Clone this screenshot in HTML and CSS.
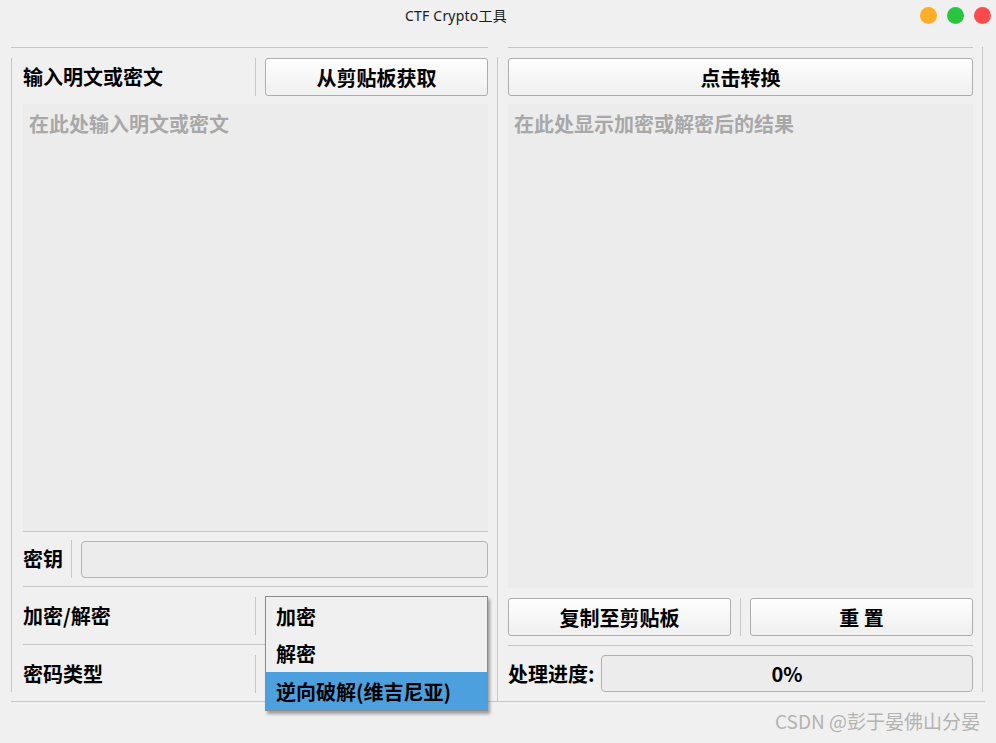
FILE: index.html
```html
<!DOCTYPE html>
<html lang="zh-CN">
<head>
  <meta charset="UTF-8">
  <title>CTF Crypto工具</title>
  <link rel="stylesheet" href="styles.css">
</head>
<body>
  <div class="window">
    <header class="titlebar">
      <span class="title">CTF Crypto工具</span>
      <div class="lights">
        <span class="light yellow"></span>
        <span class="light green"></span>
        <span class="light red"></span>
      </div>
    </header>

    <main class="frame">
      <!-- left side: input + options -->
      <section class="panel panel-left">
        <div class="panel-body bordered">
          <div class="row">
            <label class="label wide">输入明文或密文</label>
            <span class="vsep"></span>
            <button class="btn grow">从剪贴板获取</button>
          </div>
          <textarea class="textbox input-box" placeholder="在此处输入明文或密文"></textarea>
          <div class="hline"></div>
          <div class="row key-row">
            <label class="label narrow">密钥</label>
            <span class="vsep"></span>
            <input class="key-input" type="text">
          </div>
          <div class="hline gap8"></div>
          <div class="row combo-row">
            <label class="label wide">加密/解密</label>
            <span class="vsep"></span>
            <div class="combo">
              <ul class="popup">
                <li>加密</li>
                <li class="mid">解密</li>
                <li class="active">逆向破解(维吉尼亚)</li>
              </ul>
            </div>
          </div>
          <div class="hline gap9"></div>
          <div class="row type-row">
            <label class="label wide">密码类型</label>
            <span class="vsep"></span>
            <div class="combo"></div>
          </div>
        </div>
      </section>

      <span class="mid-sep"></span>

      <!-- right side: output + actions -->
      <section class="panel panel-right">
        <div class="panel-body">
          <button class="btn full">点击转换</button>
          <textarea class="textbox output-box" placeholder="在此处显示加密或解密后的结果"></textarea>
          <div class="row action-row">
            <button class="btn half">复制至剪贴板</button>
            <span class="vsep"></span>
            <button class="btn half">重&nbsp;置</button>
          </div>
          <div class="hline gap9"></div>
          <div class="row progress-row">
            <label class="label progress-label">处理进度:</label>
            <div class="progress">0%</div>
          </div>
        </div>
      </section>

      <span class="right-edge"></span>
    </main>

    <div class="bottom-line"></div>
    <footer class="watermark">CSDN @彭于晏佛山分晏</footer>
  </div>
</body>
</html>
```

FILE: styles.css
```css
* {
  margin: 0;
  padding: 0;
  box-sizing: border-box;
}

body {
  background: #f0f0f0;
  font-family: "Noto Sans CJK SC", "Noto Sans", sans-serif;
  color: #000;
}

.window {
  width: 996px;
  height: 743px;
  overflow: hidden;
  background: #f0f0f0;
}

.titlebar {
  height: 30px;
  display: flex;
  align-items: center;
  justify-content: space-between;
  padding-left: 405px;
}

.title {
  font-family: "Noto Sans", "Noto Sans CJK SC", sans-serif;
  font-size: 14px;
  color: #1a1a1a;
  letter-spacing: 0.2px;
}

.lights {
  display: flex;
  gap: 10px;
  padding-right: 5px;
  padding-top: 1px;
}

.light {
  width: 17px;
  height: 17px;
  border-radius: 50%;
}

.yellow { background: #fdad27; }
.green { background: #2ac53f; }
.red { background: #fe4a4a; }

.frame {
  display: flex;
  height: 654px;
  margin-top: 17px;
  padding-left: 11px;
}

.panel {
  border-top: 1px solid #c6c6c6;
}

.panel-left { width: 477px; }
.panel-right { width: 465px; margin-left: 10px; }

.panel-body {
  margin-top: 10px;
  display: flex;
  flex-direction: column;
}

.panel-body.bordered {
  border-left: 1px solid #c6c6c6;
  padding-left: 11px;
  height: 634px;
}

.mid-sep {
  width: 1px;
  margin-left: 9px;
  margin-top: 10px;
  background: #c6c6c6;
}

.right-edge {
  width: 1px;
  margin-left: 9px;
  height: 645px;
  background: #c6c6c6;
}

.row {
  display: flex;
  align-items: center;
  height: 38px;
  flex-shrink: 0;
}

.label {
  font-size: 20px;
  font-weight: 700;
  line-height: 26px;
}

.label.wide { width: 232px; }
.label.narrow { width: 48px; }
.progress-label { width: 93px; }

.vsep {
  width: 1px;
  height: 38px;
  background: #c8c8c8;
  margin-right: 9px;
}

.action-row .vsep { margin-left: 9px; }

.btn {
  height: 38px;
  border: 1px solid #adadad;
  border-radius: 3px;
  background: linear-gradient(#fefefe, #efefef);
  font-family: inherit;
  font-size: 20px;
  font-weight: 700;
  color: #000;
}

.btn.grow { flex: 1; }
.btn.full { width: 100%; flex-shrink: 0; }
.btn.half { width: 223px; }

.textbox {
  display: block;
  width: 100%;
  margin-top: 8px;
  padding: 7px 6px;
  border: none;
  resize: none;
  background: #ececec;
  font-family: inherit;
  font-size: 20px;
  font-weight: 700;
  line-height: 26px;
  flex-shrink: 0;
}

.textbox::placeholder { color: #a8a8a8; }

.input-box { height: 427px; }
.output-box { height: 484px; }

.hline {
  height: 1px;
  background: #c8c8c8;
  flex-shrink: 0;
}

.hline.gap8 { margin-top: 8px; }
.hline.gap9 { margin-top: 9px; }

.key-row { margin-top: 8px; }
.combo-row { margin-top: 10px; }
.type-row { margin-top: 10px; height: 37px; }
.action-row { margin-top: 10px; }
.progress-row { margin-top: 9px; height: 37px; }

.key-input {
  flex: 1;
  height: 37px;
  border: 1px solid #b4b4b4;
  border-radius: 4px;
  background: #ececec;
}

.combo {
  flex: 1;
  height: 38px;
  position: relative;
}

.popup {
  position: absolute;
  top: -1px;
  left: 0;
  right: 0;
  list-style: none;
  background: #f0f0f0;
  border: 1px solid #8c8c8c;
  box-shadow: 2px 3px 3px rgba(0, 0, 0, 0.35);
  z-index: 2;
}

.popup li {
  height: 38px;
  padding-left: 10px;
  display: flex;
  align-items: center;
  font-size: 20px;
  font-weight: 700;
}

.popup li.mid { height: 37px; }
.popup li.active { background: #4ca0dd; }

.progress {
  flex: 1;
  height: 37px;
  border: 1px solid #b0b0b0;
  border-radius: 4px;
  background: #ececec;
  display: flex;
  align-items: center;
  justify-content: center;
  font-size: 20px;
  font-weight: 700;
}

.bottom-line {
  margin-left: 11px;
  width: 974px;
  height: 1px;
  background: #c6c6c6;
}

.watermark {
  text-align: right;
  padding-right: 16px;
  padding-top: 6px;
  font-size: 19px;
  line-height: 26px;
  color: #b3b3b3;
}
```
